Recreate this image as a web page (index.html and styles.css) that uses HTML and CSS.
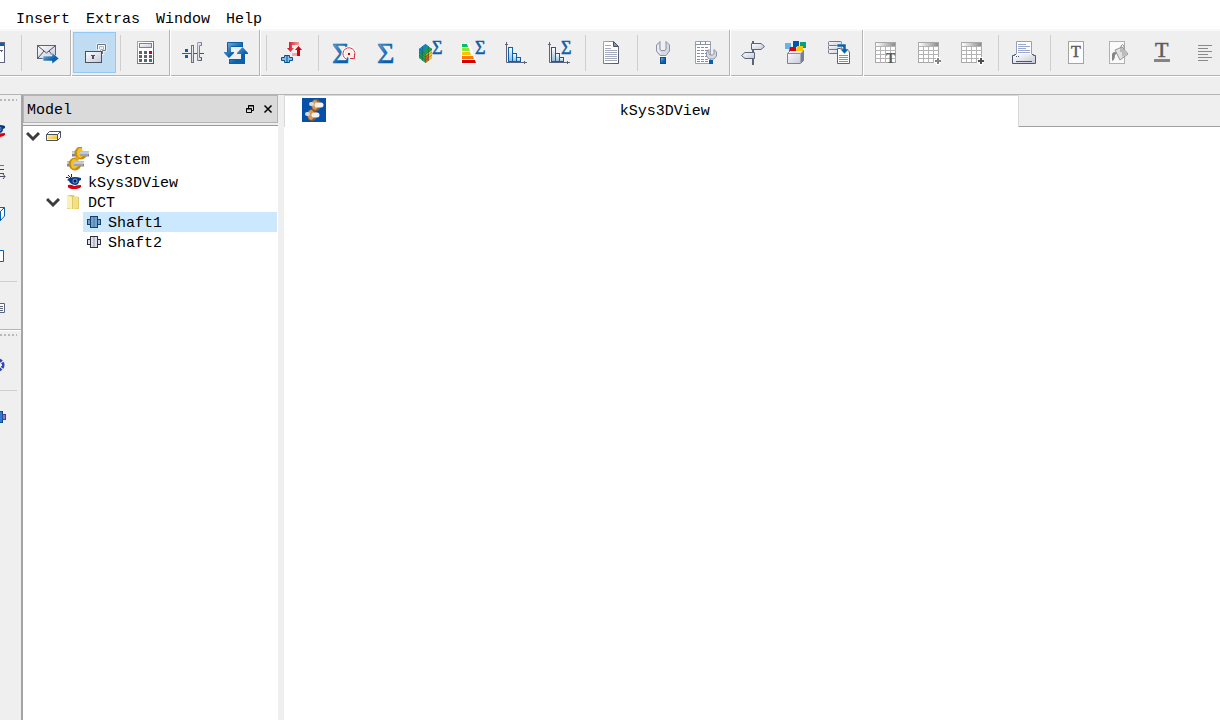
FILE: index.html
```html
<!DOCTYPE html>
<html lang="en">
<head>
<meta charset="utf-8">
<title>Model</title>
<link rel="stylesheet" href="styles.css">
</head>
<body>
<svg class="defs" width="0" height="0" aria-hidden="true">
  <defs>
    <linearGradient id="blue" x1="0" y1="0" x2="1" y2="1"><stop offset="0" stop-color="#8fbbe0"/><stop offset=".6" stop-color="#0b60ab"/></linearGradient>
    <linearGradient id="bar" x1="0" y1="0" x2="0" y2="1"><stop offset="0" stop-color="#fff"/><stop offset="1" stop-color="#8dbbe2"/></linearGradient>
    <linearGradient id="steel" x1="0" y1="0" x2="1" y2="1"><stop offset="0" stop-color="#fff"/><stop offset="1" stop-color="#c4c6d8"/></linearGradient>
    <linearGradient id="edge" x1="0" y1="0" x2="1" y2="1"><stop offset="0" stop-color="#a6a8b8"/><stop offset="1" stop-color="#4a5162"/></linearGradient>
    <linearGradient id="red" x1="0" y1="0" x2="1" y2="0"><stop offset="0" stop-color="#d40014"/><stop offset="1" stop-color="#f3a3a3"/></linearGradient>
    <linearGradient id="head" x1="0" y1="0" x2="1" y2="0"><stop offset="0" stop-color="#fff"/><stop offset="1" stop-color="#8c8c8c"/></linearGradient>
    <linearGradient id="gold" x1="0" y1="0" x2="1" y2="1"><stop offset="0" stop-color="#fff3a8"/><stop offset="1" stop-color="#f0b820"/></linearGradient>
    <g id="grid">
      <rect x="1.5" y="1.5" width="20" height="20" fill="#fff" stroke="#a8a8a8"/>
      <rect x="2" y="2" width="19" height="3" fill="url(#head)"/>
      <path d="M1 5.500H22M1 9.500H22M1 13.500H22M1 17.500H22M6.500 5V22M11.500 5V22M16.500 5V22" stroke="#b4b4b4" fill="none"/>
    </g>
    <g id="hist">
      <path d="M2.500 1V21.500H23M1 3.500H4M20.500 20V23" stroke="#5b6478" fill="none"/>
      <g fill="url(#bar)" stroke="#0b60ab"><rect x="4.500" y="6.500" width="4" height="14"/><rect x="8.500" y="12.500" width="4" height="8"/><rect x="12.500" y="16.500" width="4" height="4"/></g>
    </g>
    <g id="eye">
      <path d="M0 3.500H2L4 5M2 1L5 4M5.500 0V3" stroke="#0a2a6c" fill="none"/>
      <path d="M1 6Q6 1 15 4L15 6L13 7Q13 11 9 11Q4 10 3 7Z" fill="#0a3a82"/>
      <circle cx="9" cy="7" r="2.500" fill="#6a98d0"/><circle cx="9" cy="7" r="1.500" fill="#041c48"/>
      <path d="M2 11Q5 10 8 12Q11 11 15 11V13Q13 15 8 15Q3 15 2 13Z" fill="#d8000c"/>
    </g>
    <g id="shaft"><rect x="1.500" y="5.500" width="13" height="5"/><rect x="4.500" y="2.500" width="7" height="11"/><path d="M8 3V13" stroke-width="1" stroke-opacity=".4"/></g>
    <g id="gears">
      <path d="M6 7H23M1 17H18" stroke="#7d8598" stroke-width="5"/>
      <path d="M6 6H23M1 16H18" stroke="#ccd1de" stroke-width="2"/>
      <ellipse cx="15" cy="6" rx="5" ry="5" fill="none" stroke="#c88c10" stroke-width="3" stroke-dasharray="24 8"/>
      <ellipse cx="9" cy="17" rx="5" ry="5" fill="none" stroke="#c88c10" stroke-width="3" stroke-dasharray="24 8"/>
      <ellipse cx="14" cy="6" rx="3" ry="5" fill="#f3c02c"/><ellipse cx="8" cy="17" rx="3" ry="5" fill="#f3c02c"/>
      <path d="M14 7H22M8 17H17" stroke="#9ca3b5" stroke-width="4"/><path d="M14 6H22M8 16H17" stroke="#eceff6" stroke-width="1"/>
      <circle cx="11" cy="12" r="2" fill="#e0a51c"/>
    </g>
  </defs>
</svg>
<div class="app">
  <nav class="menu" aria-label="Main menu">
    <button type="button">Insert</button><button type="button">Extras</button><button type="button">Window</button><button type="button">Help</button>
  </nav>

  <div class="toolbar" role="toolbar" aria-label="Tools">
    <button class="tool" type="button" aria-label="Window"><svg viewBox="0 0 24 24"><rect x="1.500" y="1.500" width="20" height="20" fill="#fff" stroke="#5b6478"/><rect x="2" y="2" width="19" height="3" fill="#0b60ab"/><path d="M14 9.500H20M18.500 9V11" stroke="#5b6478"/></svg></button>
    <span class="sep"></span>
    <button class="tool" type="button" aria-label="Send"><svg viewBox="0 0 24 24"><rect x="2.500" y="4.500" width="18" height="13" fill="url(#steel)" stroke="#5b6478"/><path d="M3 5L11.500 12L20 5M3 17L9 10M20 17L14 10" fill="none" stroke="#4a5162"/><path d="M8 15H17V11.500L24 17.500L17 23V20H8Z" fill="url(#blue)" stroke="#fff" stroke-width=".5"/></svg></button>
    <span class="divider"></span>
    <button class="tool active" type="button" aria-label="Unlock"><svg viewBox="0 0 24 24"><path d="M15.500 8V3.500H23.500V9.500H20.500V13H18.500V8.500H21.500V5.500H17.500V8Z" fill="#fff" stroke="#fff" stroke-width="2"/><path d="M15.500 8.500V3.500H23.500V9.500H20.500V13" fill="none" stroke="#6b7284"/><path d="M17.500 8V5.500H21.500V8.500H18.500V10" fill="none" stroke="#b0b4c2"/><rect x="3.500" y="10.500" width="16" height="11" fill="url(#steel)" stroke="#4a5162"/><path d="M9 14.500H13" stroke="#4a5162"/><path d="M11 14V18" stroke="#4a5162" stroke-width="2"/></svg></button>
    <span class="sep"></span>
    <button class="tool" type="button" aria-label="Calculate"><svg viewBox="0 0 24 24"><rect x="3.500" y=".5" width="16" height="22" fill="#fff" stroke="url(#edge)"/><rect x="5.500" y="2.500" width="12" height="4" fill="url(#steel)" stroke="#7b8294"/><path d="M5 11.500H8M10 11.500H13M5 15.500H8M10 15.500H13M15 15.500H18M5 19.500H8M10 19.500H13M15 19.500H18" stroke="#5b6478" stroke-width="3"/><path d="M15 11.500H18" stroke="#d40014" stroke-width="3"/></svg></button>
    <span class="divider"></span>
    <button class="tool" type="button" aria-label="Gear pair"><svg viewBox="0 0 24 24"><path d="M1 12.500H16M18 12.500H23" stroke="#4a5162"/><path d="M4 8H7V11H4ZM4 14H7V17H4Z" fill="#0b60ab"/><rect x="10.500" y="4.500" width="2" height="17" fill="url(#steel)" stroke="#6b7284"/><path d="M20.500 1.500H16.500V19.500H20.500V16.500H18.500V4.500H20.500Z" fill="#dfe0ea" stroke="url(#edge)"/></svg></button>
    <button class="tool" type="button" aria-label="Update"><svg viewBox="0 0 24 24"><path d="M3 1H19V6H7V11H10V12L5 17L0 12V11H3Z" fill="url(#blue)"/><path d="M3.500 11V1.500H18.500V5.500H7" fill="none" stroke="#0b60ab"/><path d="M21 23H5V18H17V13H13V12L18.500 6L24 12V13H21Z" fill="url(#blue)"/><path d="M20.500 12V22.500H5.500V18.500H17" fill="none" stroke="#0b60ab"/></svg></button>
    <span class="divider"></span>
    <span class="sep"></span>
    <button class="tool" type="button" aria-label="Replace shaft"><svg viewBox="0 0 24 24"><path d="M9 1H19V4H12V7H14L10.500 11L7 7H9Z" fill="url(#red)"/><path d="M20 15H12V12H17V9H15L18.500 5L22 9H20Z" fill="#d40014"/><path d="M12 12H17V15H12Z" fill="#f2a8a8"/><path d="M1.500 16.500H4.500V14.500H9.500V16.500H12.500V19.500H9.500V21.500H4.500V19.500H1.500Z" fill="#86bde6" stroke="#075091"/><path d="M7 14V22" stroke="#075091"/></svg></button>
    <span class="sep"></span>
    <button class="tool" type="button" aria-label="Sum of rotation"><svg viewBox="0 0 24 24"><text class="sigma" x="0" y="22">Σ</text><path d="M14 18A6 6 0 1 1 22 16" fill="none" stroke="#fff" stroke-width="3"/><path d="M14 18A6 6 0 1 1 22 16M18 17.500H22.500V13" fill="none" stroke="#d8343c"/><rect x="16" y="12" width="2" height="2" fill="#c00"/></svg></button>
    <button class="tool" type="button" aria-label="Sum"><svg viewBox="0 0 24 24"><text class="sigma" x="2" y="22">Σ</text></svg></button>
    <button class="tool" type="button" aria-label="Mesh sum"><svg viewBox="0 0 24 24"><path d="M1 8L7.500 3L14 8V17L7.500 22L1 17Z" fill="#1c9a58"/><path d="M1 8L7.500 3L10 5L4 11L1 14Z" fill="#1583d5"/><path d="M4 14L13 7L14 8V10L6 20L4 19Z" fill="#28a848"/><path d="M14 9V17L7.500 22V14Z" fill="#fbc51c"/><path d="M7 15L11 12V19L7.500 22Z" fill="#e85a22"/><path d="M1 8L7.500 13L14 8M1 11L7.500 16L14 11M1 14L7.500 19L14 14M7.500 13V22M4.500 5V20M10.500 5V20" fill="none" stroke="#194940" stroke-width=".4"/><text class="sigma small" x="14" y="13">Σ</text></svg></button>
    <button class="tool" type="button" aria-label="Efficiency sum"><svg viewBox="0 0 24 24"><path d="M0 2H8L17 23H0Z" fill="#fff"/><path d="M1 3H6L7 6H1Z" fill="#00c060"/><path d="M1 7H8L9 10H1Z" fill="#90e62c"/><path d="M1 11H9L10 14H1Z" fill="#ffc400"/><path d="M1 15H12L13 18H1Z" fill="#ff7a00"/><path d="M1 19H14L15 22H1Z" fill="#d80000"/><text class="sigma small" x="14" y="13">Σ</text></svg></button>
    <button class="tool" type="button" aria-label="Histogram"><svg viewBox="0 0 24 24"><use href="#hist"/></svg></button>
    <button class="tool" type="button" aria-label="Histogram sum"><svg viewBox="0 0 24 24"><use href="#hist"/><text class="sigma small" x="14" y="13">Σ</text></svg></button>
    <span class="sep"></span>
    <button class="tool" type="button" aria-label="Report"><svg viewBox="0 0 24 24"><path d="M4.500 .5H14.500L19.500 5.500V22.500H4.500Z" fill="#fff" stroke="url(#edge)"/><path d="M14.500 .5V5.500H19.500Z" fill="#8d94a6" stroke="#4a5162"/><path d="M6 4.500H12M6 7.500H12M6 9.500H18M6 11.500H18M6 13.500H18M6 15.500H18M6 17.500H18M6 19.500H18" stroke="#a5aac0"/></svg></button>
    <span class="sep"></span>
    <button class="tool" type="button" aria-label="Settings"><svg viewBox="0 0 24 24"><path d="M9 .5L5.500 4V10L9 14.500H15L18.500 10V4L15 .5V8L14 9.500H10L9 8Z" fill="#d6d8e2" stroke="#8d92a4"/><path d="M7 4V10L10 12.500" fill="none" stroke="#fff"/><path d="M8 15.500H16" stroke="#fff"/><rect x="9.500" y="16.500" width="5" height="6" fill="url(#blue)" stroke="#0b4c88"/></svg></button>
    <button class="tool" type="button" aria-label="Table settings"><svg viewBox="0 0 24 24"><path d="M1.500 .5H16.500V22.500H1.500Z" fill="#fff" stroke="#9ba0b2"/><path d="M1 3.500H17M6.500 0V3M11.500 0V3" stroke="#8b91a4"/><path d="M3 6.500H15M3 9.500H15M3 12.500H15M3 15.500H15M3 18.500H15M3 20.500H15" stroke="#858ca0" stroke-dasharray="3 1"/><path d="M15 8.500L12.500 11V15L15 18H20L22.500 15V11L20 8.500V13L18.500 14H16.500L15 13Z" fill="#d6d8e2" stroke="#8d92a4"/><path d="M15 19H19V23H15Z" fill="#0b60ab"/></svg></button>
    <span class="divider"></span>
    <button class="tool" type="button" aria-label="Directions"><svg viewBox="0 0 24 24"><path d="M12 0V24" stroke="#5b6478" stroke-width="2"/><path d="M10.500 2.500H20L23.500 5.500L20 8.500H10.500Z" fill="url(#steel)" stroke="#5b6478"/><path d="M13.500 11.500H4L.5 14.500L4 17.500H13.500Z" fill="url(#steel)" stroke="#5b6478"/></svg></button>
    <button class="tool" type="button" aria-label="Components"><svg viewBox="0 0 24 24"><path d="M3.500 12.500L6.500 9.500H19.500V19.500L16.500 22.500H3.500Z" fill="url(#steel)" stroke="#7b8294"/><path d="M16.500 22V12.500L19.500 9.500V19.500Z" fill="#777e91"/><path d="M3.500 12.500H16.500" stroke="#8b91a4"/><path d="M1 2H7V8H1Z" fill="#62b5ec"/><path d="M9 0H15V6H9Z" fill="#0055aa"/><path d="M16 1H22V7H16Z" fill="#00a37e"/><path d="M6 6H12V10H5Z" fill="#d40014"/><path d="M13 5H19V10H12Z" fill="#ffc400"/></svg></button>
    <button class="tool" type="button" aria-label="Export data"><svg viewBox="0 0 24 24"><g fill="url(#steel)" stroke="#70778a"><rect x="1.500" y=".5" width="13" height="4" rx="1"/><rect x="1.500" y="4.500" width="13" height="4" rx="1"/><rect x="1.500" y="8.500" width="13" height="4" rx="1"/></g><path d="M10.500 7.500H19L22.500 11V22.500H10.500Z" fill="#fff" stroke="#5b6478"/><path d="M12 14.500H21M12 16.500H21M12 18.500H21M12 20.500H21" stroke="#8b91a4"/><path d="M10 3H19V8H22L17.500 13L13 8H16V6H10Z" fill="#0b60ab" stroke="#fff" stroke-width=".5"/></svg></button>
    <span class="divider"></span>
    <button class="tool" type="button" aria-label="Table text"><svg viewBox="0 0 24 24"><use href="#grid"/><text class="letter" x="12" y="22" font-size="14">T</text></svg></button>
    <button class="tool" type="button" aria-label="Add row"><svg viewBox="0 0 24 24"><use href="#grid"/><path d="M17 20H24M21 16V24" stroke="#fff" stroke-width="4"/><path d="M18 20H24M21 17V23" stroke="#858585" stroke-width="2"/></svg></button>
    <button class="tool" type="button" aria-label="Add column"><svg viewBox="0 0 24 24"><use href="#grid"/><path d="M17 20H24M21 16V24" stroke="#fff" stroke-width="4"/><path d="M18 20H24M21 17V23" stroke="#505050" stroke-width="2"/></svg></button>
    <span class="sep"></span>
    <button class="tool" type="button" aria-label="Print"><svg viewBox="0 0 24 24"><path d="M4.500 13V.5H19.500V13" fill="#fff" stroke="#98a0b4"/><path d="M6 3.500H14M6 5.500H18M6 7.500H14M6 9.500H18M6 11.500H18" stroke="#98a8d0"/><path d="M4 13.500H2.500V14.500H.5V22.500H23.500V14.500H21.500V13.500H20" fill="url(#steel)" stroke="#4d5870"/><path d="M4 20.500H20M4 15.500H5M6 15.500H7" stroke="#4d5870"/></svg></button>
    <span class="sep"></span>
    <button class="tool" type="button" aria-label="Text page"><svg viewBox="0 0 24 24"><rect x="4.500" y=".5" width="15" height="22" fill="#fdfdfd" stroke="#a4a4a4"/><text class="letter thin" x="7" y="16" font-size="16">T</text></svg></button>
    <button class="tool" type="button" aria-label="Fill"><svg viewBox="0 0 24 24"><rect x="2.500" y=".5" width="15" height="22" fill="#fafafa" stroke="#b0b0b0"/><path d="M8 9L15 6L21 13L13 19Z" fill="#e2e2e2" stroke="#959595"/><path d="M15 7L20 13L15 16Z" fill="#bcbcbc"/><path d="M8 11Q5 11 5 14V20Q8 19 8 14L10 12Z" fill="#858585"/><path d="M14 11V5Q16 2 17 5V9" fill="none" stroke="#909090"/></svg></button>
    <button class="tool" type="button" aria-label="Text colour"><svg viewBox="0 0 24 24"><text class="letter thin" x="5" y="16" font-size="22">T</text><path d="M4 19.500H20" stroke="#858585" stroke-width="3"/></svg></button>
    <button class="tool" type="button" aria-label="Align left"><svg viewBox="0 0 24 24"><path d="M5 4.500H19M5 7.500H15M5 10.500H19M5 13.500H15M5 16.500H19M5 19.500H15" stroke="#8a8a8a"/></svg></button>
  </div>

  <div class="strip"></div>

  <main class="work">
    <aside class="rail">
      <div class="rail-group">
        <span class="grip"></span>
        <button class="rail-tool" type="button" aria-label="View"><svg viewBox="0 0 16 16"><use href="#eye"/></svg></button>
        <button class="rail-tool" type="button" aria-label="List"><svg viewBox="0 0 16 16"><path d="M0 1.500H14" stroke="#18a078"/><path d="M0 5.500H14" stroke="#d40014"/><path d="M0 9.500H14" stroke="#4a5162"/><path d="M0 12.500H15M13 10L15 12.500L13 15" stroke="#4a5162" fill="none"/></svg></button>
        <button class="rail-tool" type="button" aria-label="Box"><svg viewBox="0 0 16 16"><path d="M1 5.500H10.500V14.500H1ZM1 5L5 1.500H14.500V10L10.500 14.500V5.500L14.500 1.500" fill="#fff" stroke="#0b60ab"/></svg></button>
        <button class="rail-tool" type="button" aria-label="Plane"><svg viewBox="0 0 16 16"><path d="M1 2.500H13.500V13.500H1Z" fill="#fff" stroke="#0b60ab"/></svg></button>
        <span class="rail-sep"></span>
        <button class="rail-tool" type="button" aria-label="Properties"><svg viewBox="0 0 16 16"><path d="M1 3.500H14.500V12.500H1Z" fill="#fff" stroke="#5b6478"/><path d="M8 6.500H13M8 8.500H13M8 10.500H13" stroke="#5b6478"/></svg></button>
      </div>
      <div class="rail-group">
        <span class="grip"></span>
        <button class="rail-tool" type="button" aria-label="Gear"><svg viewBox="0 0 16 16"><circle cx="8" cy="8" r="5" fill="none" stroke="#2848b8" stroke-width="3" stroke-dasharray="3 1"/><path d="M8 8H12" stroke="#efefef" stroke-width="2"/></svg></button>
        <span class="rail-sep"></span>
        <button class="rail-tool" type="button" aria-label="Shaft"><svg viewBox="0 0 16 16"><rect x="4.500" y="2.500" width="8" height="11" fill="#2a7fca" stroke="#07508f"/><rect x="12.500" y="5.500" width="3" height="5" fill="#7a7ad0" stroke="#404098"/></svg></button>
      </div>
    </aside>

    <section class="dock">
      <header class="dock-title">
        <h2>Model</h2>
        <button type="button" aria-label="Float"><svg viewBox="0 0 10 10"><path d="M3.500 4V1.500H8.500V6.500H6M1.500 4.500H6.500V8.500H1.500ZM3 2H9M1 5H7" fill="none" stroke="#000"/></svg></button>
        <button type="button" aria-label="Close"><svg viewBox="0 0 10 10"><path d="M1.500 1.500L8.500 8.500M8.500 1.500L1.500 8.500" stroke="#000" stroke-width="1.500"/></svg></button>
      </header>
      <ul class="tree">
        <li class="row"><svg class="chev" viewBox="0 0 14 14"><path d="M1 4L7 10L13 4" /></svg><svg class="ic" viewBox="0 0 16 16"><path d="M.5 6.500L3.500 3.500H14.500V9.500L11.500 12.500H.5Z" fill="#fff" stroke="#4a5162"/><rect x="1.500" y="6.500" width="10" height="5" fill="url(#gold)" stroke="#fff3c0"/><path d="M.5 6.500H11.500V12.500M11.500 6.500L14.500 3.500" fill="none" stroke="#4a5162"/></svg></li>
        <li class="row level1 tall"><svg class="big" viewBox="0 0 24 24"><use href="#gears"/></svg><span>System</span></li>
        <li class="row level1"><svg class="ic" viewBox="0 0 16 16"><use href="#eye"/></svg><span>kSys3DView</span></li>
        <li class="row folder"><svg class="chev" viewBox="0 0 14 14"><path d="M1 4L7 10L13 4"/></svg><svg class="ic" viewBox="0 0 16 16"><path d="M1 1H8L9 3H13V15H1Z" fill="#e3ca68"/><path d="M1 1L6 3V15L1 14Z" fill="#fbf0b8"/><path d="M7 3L12 2V14L7 15Z" fill="#f3e08e"/></svg><span>DCT</span></li>
        <li class="row level2 selected"><svg class="ic" viewBox="0 0 16 16"><use href="#shaft" fill="#6fa3d0" stroke="#173f66"/></svg><span>Shaft1</span></li>
        <li class="row level2"><svg class="ic" viewBox="0 0 16 16"><use href="#shaft" fill="#dedfe8" stroke="#2c3040"/></svg><span>Shaft2</span></li>
      </ul>
    </section>

    <section class="view">
      <div class="tabs" role="tablist">
        <button class="tab" type="button" role="tab" aria-selected="true">
          <svg viewBox="0 0 24 24"><rect width="24" height="24" fill="#0750a8"/><ellipse cx="14" cy="7" rx="5" ry="6" fill="#8f5c2c"/><ellipse cx="13" cy="7" rx="3" ry="5" fill="#d39a5c"/><ellipse cx="10" cy="17" rx="5" ry="6" fill="#8f5c2c"/><ellipse cx="9" cy="17" rx="3" ry="5" fill="#d39a5c"/><path d="M9 6H10M5 16H6" stroke="#d8d8d8" stroke-width="4" stroke-linecap="round"/><path d="M15 7H19M12 17H15" stroke="#f4f2ee" stroke-width="5" stroke-linecap="round"/></svg>
          <span>kSys3DView</span>
        </button>
        <div class="tab-rest"></div>
      </div>
      <div class="canvas"></div>
    </section>
  </main>
</div>
</body>
</html>
```

FILE: styles.css
```css
* { box-sizing: border-box; }

body {
  margin: 0;
  background: #efefef;
  color: #000;
  font: 15px/20px "Liberation Mono", "Courier New", monospace;
}

svg { display: block; flex: none; }
.defs { position: absolute; }

button {
  margin: 0;
  padding: 0;
  border: 0;
  background: none;
  color: inherit;
  font: inherit;
}

.app {
  display: flex;
  flex-direction: column;
  height: 100vh;
  overflow: hidden;
}

.menu {
  display: flex;
  gap: 16px;
  padding: 10px 16px 0;
  height: 29px;
  background: #fff;
  flex: none;
}
.menu button { height: 18px; }

.toolbar {
  display: flex;
  align-items: stretch;
  height: 48px;
  margin-left: -26px;
  padding-top: 1px;
  border-bottom: 1px solid #fff;
  box-shadow: inset 0 -1px #b4b4b4, inset 0 2px #f8f8f8;
  flex: none;
}

.tool {
  flex: none;
  width: 43px;
  margin: 2px 0 3px;
  padding: 1px 10px 0 9px;
  display: flex;
  align-items: center;
}
.tool svg { width: 24px; height: 24px; overflow: visible; }
.tool.active {
  background: #c0dcf3;
  box-shadow: inset 0 0 0 1px #90c8f6;
}

.sep {
  flex: none;
  width: 1px;
  margin: 5px 4px;
  background: #cfcfcf;
}

.divider {
  flex: none;
  width: 2px;
  margin: 0 1px;
  border-left: 1px solid #b4b4b4;
  border-right: 1px solid #fff;
}

.sigma {
  font-family: "Liberation Serif", serif;
  font-size: 30px;
  fill: url(#blue);
  stroke: #0b60ab;
  stroke-width: 0.5;
}
.sigma.small { font-size: 18px; fill: #0b60ab; }
.letter { font-family: "Liberation Serif", serif; font-weight: bold; fill: #5c5c5c; }
.letter.thin { font-weight: normal; stroke: #5c5c5c; stroke-width: 0.5; }

.strip {
  flex: none;
  height: 18px;
  border-bottom: 1px solid #b4b4b4;
}

.work {
  flex: 1;
  display: flex;
  min-height: 0;
}

.rail {
  flex: none;
  width: 23px;
  border-right: 2px solid #a4a4a4;
}
.rail-group {
  display: flex;
  flex-direction: column;
  border-bottom: 1px solid #b4b4b4;
  padding-top: 4px;
}
.rail-group + .rail-group { border-top: 1px solid #fff; border-bottom: 0; padding-top: 3px; }
.grip {
  width: 17px;
  height: 2px;
  margin-bottom: 8px;
  background: repeating-linear-gradient(90deg, #b8b8b8 0 2px, transparent 2px 4px);
}
.rail-tool {
  width: 16px;
  height: 42px;
  margin-left: -10px;
  display: flex;
  align-items: center;
}
.rail-tool svg { width: 16px; height: 16px; }
.rail-sep { width: 17px; height: 1px; margin: 4px 0 5px; background: #cfcfcf; }

.dock {
  flex: none;
  width: 255px;
  display: flex;
  flex-direction: column;
}
.dock-title {
  display: flex;
  align-items: center;
  gap: 8px;
  height: 28px;
  margin-bottom: 2px;
  padding: 0 4px 0 3px;
  border: 1px solid #b4b4b4;
  background: #dadada;
  flex: none;
}
.dock-title h2 { flex: 1; margin: 0; padding-top: 4px; font: inherit; }
.dock-title svg { width: 10px; height: 10px; }

.tree {
  flex: 1;
  margin: 0;
  padding: 0 1px 0 0;
  list-style: none;
  background: #fff;
  border-top: 1px solid #999;
}
.row {
  display: flex;
  align-items: center;
  gap: 6px;
  height: 20px;
  padding-left: 3px;
}
.row span { padding-top: 3px; }
.level1 { padding-left: 43px; }
.tall { height: 26px; }
.folder { padding-left: 23px; }
.level2 { margin-left: 60px; padding-left: 3px; }
.selected { background: #cce8ff; }
.ic { width: 16px; height: 16px; }
.big { width: 24px; height: 24px; }
.chev {
  width: 14px;
  height: 14px;
  fill: none;
  stroke: #3c3c3c;
  stroke-width: 3;
}

.view {
  flex: 1;
  display: flex;
  flex-direction: column;
  margin-left: 6px;
  min-width: 0;
}
.tabs { display: flex; height: 32px; flex: none; }
.tab {
  flex: 0 0 78.5%;
  display: flex;
  align-items: center;
  padding: 0 14px 3px 17px;
  background: #fff;
  border: 1px solid #d8d8d8;
  border-bottom: 0;
}
.tab svg { width: 24px; height: 24px; }
.tab span { flex: 1; padding-top: 4px; text-align: center; }
.tab-rest { flex: 1; border-bottom: 1px solid #a0a0a0; }
.canvas { flex: 1; background: #fff; }
```
